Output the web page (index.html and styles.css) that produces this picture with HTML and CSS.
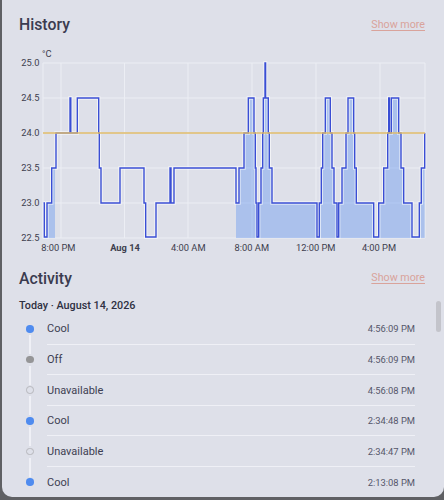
FILE: index.html
```html
<!DOCTYPE html>
<html>
<head>
<meta charset="utf-8">
<link rel="stylesheet" href="styles.css">
</head>
<body>
<div class="card">
  <div class="section-head">
    <h2 class="title">History</h2>
    <a class="more">Show more</a>
  </div>
  <svg class="chart" width="406" height="214" viewBox="19 44 406 214">
    <g class="grid">
      <line x1="43" y1="63" x2="425" y2="63"/>
      <line x1="43" y1="98" x2="425" y2="98"/>
      <line x1="43" y1="133" x2="425" y2="133"/>
      <line x1="43" y1="168" x2="425" y2="168"/>
      <line x1="43" y1="203" x2="425" y2="203"/>
      <line x1="43" y1="238" x2="425" y2="238"/>
      <line x1="43" y1="63" x2="43" y2="238"/>
      <line x1="61" y1="63" x2="61" y2="238"/>
      <line x1="124.5" y1="63" x2="124.5" y2="238"/>
      <line x1="188" y1="63" x2="188" y2="238"/>
      <line x1="252" y1="63" x2="252" y2="238"/>
      <line x1="316" y1="63" x2="316" y2="238"/>
      <line x1="380" y1="63" x2="380" y2="238"/>
      <line x1="425" y1="63" x2="425" y2="238"/>
    </g>
    <g class="ylab">
      <text x="39.5" y="66.3">25.0</text>
      <text x="39.5" y="101.3">24.5</text>
      <text x="39.5" y="136.3">24.0</text>
      <text x="39.5" y="171.3">23.5</text>
      <text x="39.5" y="206.3">23.0</text>
      <text x="39.5" y="241.3">22.5</text>
    </g>
    <text class="unit" x="42" y="57">°C</text>
    <g class="xlab">
      <text x="58.3" y="251">8:00 PM</text>
      <text class="bold" x="125" y="251">Aug 14</text>
      <text x="188.3" y="251">4:00 AM</text>
      <text x="251.8" y="251">8:00 AM</text>
      <text x="315.7" y="251">12:00 PM</text>
      <text x="379" y="251">4:00 PM</text>
    </g>
    <path class="area" d="M44.3 238 V237 H47 V203 H51.7 V168 H55 V238 Z"/>
    <path class="area" d="M236 238 V203 H239 V168 H244 V133 H248.3 V98 H254 V133 H255.3 V168 H256 V203 H257 V237 H258.7 V203 H261 V168 H262.7 V133 H263.3 V98 H265 V63 H265.6 V98 H268.3 V133 H269.3 V168 H272 V203 H317 V237 H319.3 V203 H321.3 V168 H322.7 V133 H325.3 V98 H330.3 V133 H332 V168 H334 V203 H337 V237 H338.7 V203 H342 V168 H346 V133 H348 V98 H353.7 V133 H354.7 V168 H357 V203 H373.7 V237 H378.7 V203 H383.7 V168 H387.7 V133 H388.7 V98 H389.4 V133 H391.3 V98 H398.7 V133 H401 V168 H403.7 V203 H412 V237 H419.3 V203 H421.3 V168 H424.7 V133 V238 Z"/>
    <path class="halo" d="M43.5 203 H44.3 V237 H47 V203 H51.7 V168 H56 V133 H70 V98 H70.8 V133 H77.3 V98 H98.7 V133 H99.3 V168 H101 V203 H120 V168 H144 V203 H145.7 V237 H156 V203 H170 V168 H171 V203 H174 V168 H236 V203 H239 V168 H244 V133 H248.3 V98 H254 V133 H255.3 V168 H256 V203 H257 V237 H258.7 V203 H261 V168 H262.7 V133 H263.3 V98 H265 V63 H265.6 V98 H268.3 V133 H269.3 V168 H272 V203 H317 V237 H319.3 V203 H321.3 V168 H322.7 V133 H325.3 V98 H330.3 V133 H332 V168 H334 V203 H337 V237 H338.7 V203 H342 V168 H346 V133 H348 V98 H353.7 V133 H354.7 V168 H356.3 V203 H373.7 V237 H378.7 V203 H383.7 V168 H387.7 V133 H388.7 V98 H389.4 V133 H391.3 V98 H398.7 V133 H401 V168 H403.7 V203 H412 V237 H419.3 V203 H421.3 V168 H424.7 V133"/>
    <path class="line" d="M43.5 203 H44.3 V237 H47 V203 H51.7 V168 H56 V133 H70 V98 H70.8 V133 H77.3 V98 H98.7 V133 H99.3 V168 H101 V203 H120 V168 H144 V203 H145.7 V237 H156 V203 H170 V168 H171 V203 H174 V168 H236 V203 H239 V168 H244 V133 H248.3 V98 H254 V133 H255.3 V168 H256 V203 H257 V237 H258.7 V203 H261 V168 H262.7 V133 H263.3 V98 H265 V63 H265.6 V98 H268.3 V133 H269.3 V168 H272 V203 H317 V237 H319.3 V203 H321.3 V168 H322.7 V133 H325.3 V98 H330.3 V133 H332 V168 H334 V203 H337 V237 H338.7 V203 H342 V168 H346 V133 H348 V98 H353.7 V133 H354.7 V168 H356.3 V203 H373.7 V237 H378.7 V203 H383.7 V168 H387.7 V133 H388.7 V98 H389.4 V133 H391.3 V98 H398.7 V133 H401 V168 H403.7 V203 H412 V237 H419.3 V203 H421.3 V168 H424.7 V133"/>
    <line class="target" x1="43" y1="133" x2="425" y2="133"/>
  </svg>

  <div class="section-head activity-head">
    <h2 class="title">Activity</h2>
    <a class="more">Show more</a>
  </div>
  <div class="day">Today · August 14, 2026</div>
  <div class="log">
    <div class="row first">
      <div class="rail"><span class="seg top"></span><span class="dot cool"></span><span class="seg bottom"></span></div>
      <div class="entry"><span class="state">Cool</span><span class="time">4:56:09 PM</span></div>
    </div>
    <div class="row">
      <div class="rail"><span class="seg top"></span><span class="dot off"></span><span class="seg bottom"></span></div>
      <div class="entry"><span class="state">Off</span><span class="time">4:56:09 PM</span></div>
    </div>
    <div class="row">
      <div class="rail"><span class="seg top"></span><span class="dot unavail"></span><span class="seg bottom"></span></div>
      <div class="entry"><span class="state">Unavailable</span><span class="time">4:56:08 PM</span></div>
    </div>
    <div class="row">
      <div class="rail"><span class="seg top"></span><span class="dot cool"></span><span class="seg bottom"></span></div>
      <div class="entry"><span class="state">Cool</span><span class="time">2:34:48 PM</span></div>
    </div>
    <div class="row">
      <div class="rail"><span class="seg top"></span><span class="dot unavail"></span><span class="seg bottom"></span></div>
      <div class="entry"><span class="state">Unavailable</span><span class="time">2:34:47 PM</span></div>
    </div>
    <div class="row last">
      <div class="rail"><span class="seg top"></span><span class="dot cool"></span><span class="seg bottom"></span></div>
      <div class="entry"><span class="state">Cool</span><span class="time">2:13:08 PM</span></div>
    </div>
  </div>
  <div class="scrollbar"></div>
</div>
</body>
</html>
```

FILE: styles.css
```css
html, body {
  margin: 0;
  padding: 0;
}
body {
  background: #5f6064;
  width: 444px;
  height: 500px;
  overflow: hidden;
  font-family: Roboto, "Liberation Sans", sans-serif;
}
.card {
  position: relative;
  margin-left: 2px;
  width: 442px;
  height: 497px;
  box-sizing: border-box;
  padding: 0 19px 0 17px;
  background: #dee0e9;
  border-radius: 0 0 10px 10px;
  overflow: hidden;
}
.section-head {
  display: flex;
  justify-content: space-between;
  align-items: center;
  padding-top: 14px;
  height: 22px;
}
.title {
  margin: 0;
  font-size: 15.8px;
  font-weight: 500;
  color: #3a3b4f;
  line-height: 22px;
}
.more {
  font-size: 10.7px;
  color: #d9a39b;
  text-decoration: underline;
  text-underline-offset: 2px;
  line-height: 16px;
  margin-top: -1px;
}
.chart {
  display: block;
  margin-top: 8px;
  overflow: visible;
}
.grid line {
  stroke: #eceef4;
  stroke-width: 1;
}
.ylab text {
  font-size: 9.3px;
  fill: #3d3e4e;
  text-anchor: end;
}
.unit {
  font-size: 9.3px;
  fill: #3d3e4e;
}
.xlab text {
  font-size: 9.3px;
  fill: #3d3e4e;
  text-anchor: middle;
}
.xlab .bold {
  font-weight: 700;
}
.area {
  fill: rgba(100, 150, 240, 0.42);
  stroke: none;
}
.halo {
  fill: none;
  stroke: rgba(255, 255, 255, 0.6);
  stroke-width: 3.4;
  stroke-linejoin: miter;
}
.line {
  fill: none;
  stroke: #3a4ed4;
  stroke-width: 1.4;
}
.target {
  stroke: #dfbb68;
  stroke-width: 1.6;
}
.activity-head {
  padding-top: 9.5px;
}
.day {
  margin-top: 8px;
  font-size: 10.8px;
  font-weight: 500;
  color: #2f3042;
  line-height: 16px;
}
.log {
  margin-top: 0.6px;
  margin-right: 10px;
}
.row {
  display: flex;
  height: 30.6px;
}
.rail {
  width: 22px;
  display: flex;
  flex-direction: column;
  align-items: center;
  margin-right: 6px;
}
.seg {
  flex: 1;
  width: 2px;
  background: #eff0f6;
}
.seg.top {
  margin-bottom: 2.5px;
}
.seg.bottom {
  margin-top: 2.5px;
}
.row.first .seg.top,
.row.last .seg.bottom {
  background: transparent;
}
.dot {
  width: 7.5px;
  height: 7.5px;
  border-radius: 50%;
  box-sizing: border-box;
  margin-top: -0.8px;
}
.dot.cool {
  background: #4f8bef;
}
.dot.off {
  background: #959597;
}
.dot.unavail {
  border: 1.5px solid #b6b7bc;
  background: transparent;
}
.entry {
  flex: 1;
  display: flex;
  justify-content: space-between;
  align-items: center;
  border-bottom: 1px solid #eff0f6;
}
.row.last .entry {
  border-bottom: none;
}
.state {
  font-size: 11px;
  color: #3d3e52;
}
.time {
  font-size: 9.4px;
  color: #55566a;
}
.scrollbar {
  position: absolute;
  top: 300.7px;
  right: 2.7px;
  width: 5px;
  height: 31px;
  border-radius: 3px;
  background: #c3c4cb;
}
```
